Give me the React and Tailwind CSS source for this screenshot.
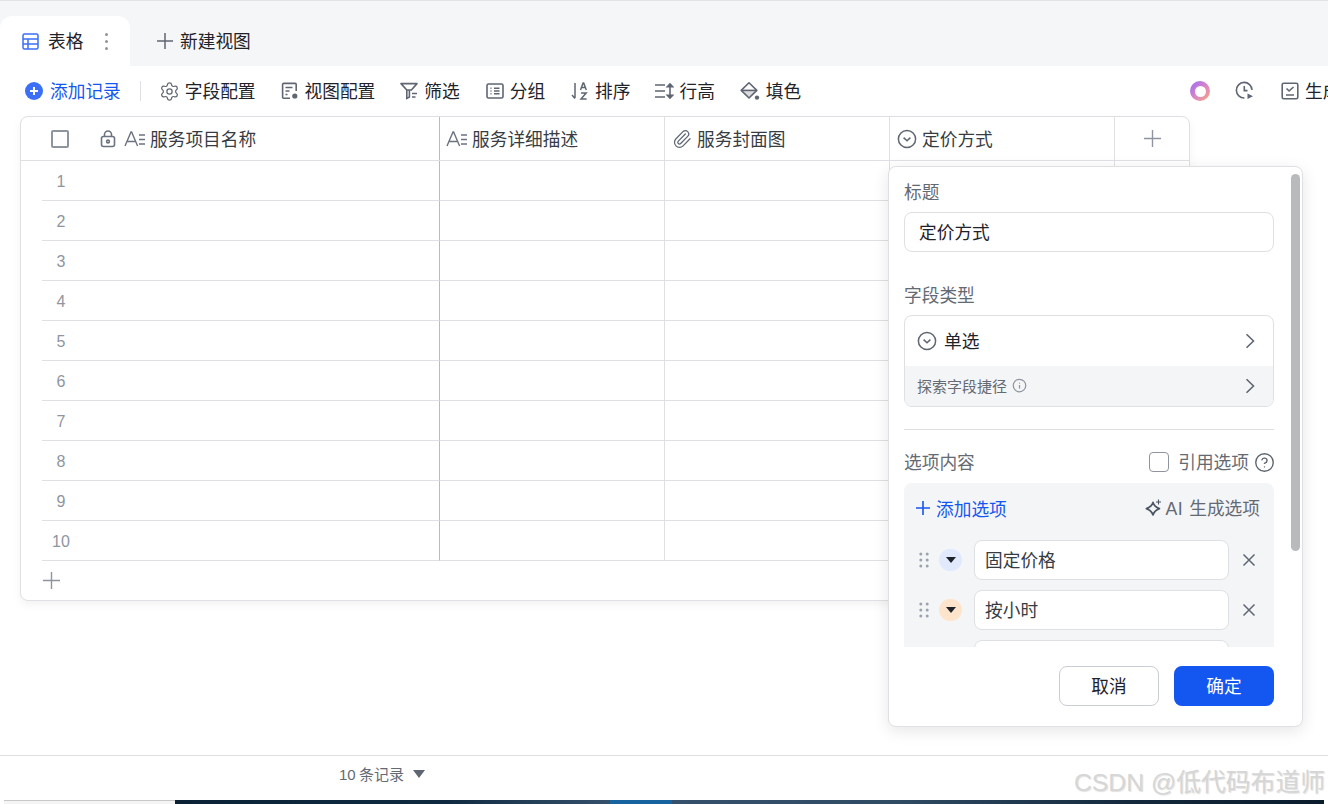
import React from "react";
import { Settings, Paperclip, Info, CircleHelp } from "lucide-react";

const FONT = "font-['Noto_Sans_CJK_SC','Liberation_Sans',sans-serif]";
const LATIN = "font-['Liberation_Sans','Noto_Sans_CJK_SC',sans-serif]";

function Cross({ size, color = "#8f959e", width = 1.4 }) {
  return (
    <svg width={size} height={size} viewBox={`0 0 ${size} ${size}`} fill="none" stroke={color} strokeWidth={width}>
      <path d={`M${size / 2} 0V${size}M0 ${size / 2}H${size}`} />
    </svg>
  );
}

function CloseIcon() {
  return (
    <svg width="14" height="14" viewBox="0 0 14 14" fill="none" stroke="#5f6672" strokeWidth="1.5">
      <path d="m1.5 1.5 11 11M12.5 1.5l-11 11" />
    </svg>
  );
}

function Chevron() {
  return (
    <svg width="10" height="16" viewBox="0 0 10 16" fill="none" stroke="#5f6672" strokeWidth="1.6">
      <path d="m1.5 1.2 7 6.8-7 6.8" />
    </svg>
  );
}

function TextIcon() {
  return (
    <svg width="22" height="20" viewBox="0 0 22 20" fill="none" stroke="#6b7280" strokeWidth="1.4">
      <path d="M1 17 7 3h.6l6 14M3.2 12.5h8.6" />
      <path d="M15 6h6M15 10.5h6M15 15h6" />
    </svg>
  );
}

function LockIcon() {
  return (
    <svg width="16" height="18" viewBox="0 0 16 18" fill="none" stroke="#6b7280" strokeWidth="1.6">
      <rect x="1.5" y="6.5" width="13" height="10" rx="2" />
      <path d="M4.5 6.5V4.5a3.5 3.5 0 0 1 7 0v2" />
      <circle cx="8" cy="11.5" r="1.4" />
    </svg>
  );
}

function SelectIcon() {
  return (
    <svg width="20" height="20" viewBox="0 0 20 20" fill="none" stroke="#5f6672" strokeWidth="1.5">
      <circle cx="10" cy="10" r="8.6" />
      <path d="m6.6 8.6 3.4 3.2 3.4-3.2" />
    </svg>
  );
}

function ViewConfigIcon() {
  return (
    <svg width="18" height="18" viewBox="0 0 18 18" fill="none" stroke="#5f6672" strokeWidth="1.6">
      <path d="M9 16.2H2.6a1 1 0 0 1-1-1V2.4a1 1 0 0 1 1-1h11.6a1 1 0 0 1 1 1V9" />
      <path d="M4.5 5.5h7M4.5 9h4M4.5 12.5h2" />
      <circle cx="13.8" cy="14" r="2.6" fill="#5f6672" stroke="none" />
    </svg>
  );
}

function FilterIcon() {
  return (
    <svg width="18" height="18" viewBox="0 0 18 18" fill="none" stroke="#5f6672" strokeWidth="1.6">
      <path d="M1 1.6h16l-5.6 6.4H6.8Z" strokeLinejoin="round" />
      <path d="M6.8 8v8.4l2.6-1.4V8" />
      <path d="M12 11.5h5M12 15h3.5" />
    </svg>
  );
}

function GroupIcon() {
  return (
    <svg width="18" height="18" viewBox="0 0 18 18" fill="none" stroke="#5f6672" strokeWidth="1.6">
      <rect x="1" y="2" width="16" height="14" rx="1.5" />
      <path d="M4.5 6.3h1M8 6.3h5.5M4.5 9h1M8 9h5.5M4.5 11.8h1M8 11.8h5.5" />
    </svg>
  );
}

function SortIcon() {
  return (
    <svg width="18" height="20" viewBox="0 0 18 20" fill="none" stroke="#5f6672" strokeWidth="1.5">
      <path d="M4 2v15M1 14l3 3.4" />
      <path d="m9.5 9 2.6-7h.6l2.6 7M10.5 6.5h3.8" />
      <path d="M10 12h5.2l-5.2 6h5.6" />
    </svg>
  );
}

function RowHeightIcon() {
  return (
    <svg width="20" height="18" viewBox="0 0 20 18" fill="none" stroke="#5f6672" strokeWidth="1.6">
      <path d="M1 3h10M1 9h10M1 15h10" />
      <path d="M16 2v14" />
      <path d="M13.5 4.6 16 2l2.5 2.6ZM13.5 13.4 16 16l2.5-2.6Z" fill="#5f6672" />
    </svg>
  );
}

function FillIcon() {
  return (
    <svg width="20" height="20" viewBox="0 0 20 20" fill="none" stroke="#5f6672" strokeWidth="1.6">
      <path d="M1.5 9.5h15L9 16.8Z" fill="#d9dbdf" stroke="none" />
      <path d="M9 1.8 1.2 9.4 9 17l7.8-7.6Z" strokeLinejoin="round" />
      <path d="M1.5 9.4h15" />
      <circle cx="17" cy="16.6" r="2.2" fill="#5f6672" stroke="none" />
    </svg>
  );
}

function HistoryIcon() {
  return (
    <svg width="20" height="20" viewBox="0 0 20 20" fill="none" stroke="#5f6672" strokeWidth="1.6">
      <path d="M17 9a7.8 7.8 0 1 0-7.6 8" />
      <path d="M9.3 5v4.6h3.2" />
      <path d="m12.5 12.5 5.5 2.8-5.5 2.8Z" fill="#5f6672" stroke="none" />
    </svg>
  );
}

function FormIcon() {
  return (
    <svg width="18" height="18" viewBox="0 0 18 18" fill="none" stroke="#5f6672" strokeWidth="1.6">
      <rect x="1.2" y="1.2" width="15.6" height="15.6" rx="1.5" />
      <path d="m5.5 6.5 2.6 2.5 4.4-4M5 13h8" />
    </svg>
  );
}

function SparkIcon() {
  return (
    <svg width="18" height="18" viewBox="0 0 18 18" fill="none" stroke="#4b5563" strokeWidth="1.7">
      <path d="M8 3.4C9 6.6 10.4 8 14.4 9.6 10.4 11 9 12.6 8 16 7 12.6 5.6 11 1.4 9.6 5.6 8 7 6.6 8 3.4Z" strokeLinejoin="round" />
      <path d="M13.5 0.5v5M11 3h5" strokeWidth="1.1" />
    </svg>
  );
}

function Handle() {
  return (
    <svg width="10" height="16" viewBox="0 0 10 16" fill="#9ca3af">
      <circle cx="1.8" cy="2" r="1.5" /><circle cx="8.2" cy="2" r="1.5" />
      <circle cx="1.8" cy="8" r="1.5" /><circle cx="8.2" cy="8" r="1.5" />
      <circle cx="1.8" cy="14" r="1.5" /><circle cx="8.2" cy="14" r="1.5" />
    </svg>
  );
}

function ToolItem({ icon, label, className }) {
  return (
    <div className={`flex items-center text-[#1f2329] ${className}`}>
      {icon}
      <span>{label}</span>
    </div>
  );
}

function OptionRow({ label, dotClass }) {
  return (
    <div className="flex items-center h-10">
      <div className="ml-[15px] w-[10px] flex"><Handle /></div>
      <div className={`ml-[10px] w-[23px] h-[22px] rounded-full flex items-center justify-center ${dotClass}`}>
        <div className="w-0 h-0 border-x-[5px] border-x-transparent border-t-[6px] border-t-[#1f2329]" />
      </div>
      <div className="ml-3 w-[255px] h-10 bg-white border border-[#dee0e3] rounded-lg flex items-center px-[10px] text-[#373c43]">
        {label}
      </div>
      <div className="ml-[13px] flex"><CloseIcon /></div>
    </div>
  );
}

function FieldPopup() {
  return (
    <div className="absolute left-[888px] top-[166px] w-[415px] h-[561px] bg-white border border-[#dee0e3] rounded-lg shadow-[0_4px_16px_rgba(0,0,0,0.1)] flex flex-col z-10">
      <div className="absolute right-[2px] top-[7px] w-[9px] h-[377px] bg-[#b9babc] rounded-full" />
      <div className="h-[480px] shrink-0 overflow-hidden pl-[15px] w-[385px]">
        <div className="mt-[12px] h-[26px] flex items-center text-[#646a73]">标题</div>
        <div className="mt-[7px] h-10 border border-[#dee0e3] rounded-lg flex items-center px-[14px] text-[#1f2329]">定价方式</div>
        <div className="mt-[30px] h-[26px] flex items-center text-[#646a73]">字段类型</div>
        <div className="mt-[7px] h-[92px] border border-[#dee0e3] rounded-lg overflow-hidden">
          <div className="h-[50px] flex items-center justify-between pl-3 pr-[18px] text-[#1f2329]">
            <div className="flex items-center gap-[7px]"><SelectIcon /><span>单选</span></div>
            <Chevron />
          </div>
          <div className="h-10 pb-[1px] bg-[#f4f5f7] flex items-center justify-between pl-3 pr-[18px] text-[#646a73] text-[15px]">
            <div className="flex items-center gap-[5px]"><span>探索字段捷径</span><Info size={15} className="text-[#8f959e]" /></div>
            <Chevron />
          </div>
        </div>
        <div className="mt-[22px] border-t border-[#dee0e3]" />
        <div className="mt-[19px] h-[26px] flex items-center justify-between text-[#646a73]">
          <span>选项内容</span>
          <div className="flex items-center">
            <div className="w-5 h-5 border border-[#8f959e] rounded-[4px] mr-[9px]" />
            <span>引用选项</span>
            <CircleHelp size={21} strokeWidth={1.6} className="ml-[5px] -mr-[1px] text-[#5f6672]" />
          </div>
        </div>
        <div className="mt-[8px] h-[300px] bg-[#f4f5f7] rounded-t-lg">
          <div className="h-[51px] flex items-center justify-between pl-[12px] pr-[14px]">
            <div className="flex items-center gap-[6px] text-[#1456f0]">
              <Cross size={14} color="#1456f0" width={1.6} /><span>添加选项</span>
            </div>
            <div className="flex items-center gap-[3px] text-[#646a73]">
              <SparkIcon />
              <span><span className={`${LATIN} font-medium mr-[2px] tracking-[0.5px]`}>AI</span> 生成选项</span>
            </div>
          </div>
          <div className="mt-[6px] flex flex-col gap-[10px]">
            <OptionRow label="固定价格" dotClass="bg-[#e1e9ff]" />
            <OptionRow label="按小时" dotClass="bg-[#ffe4cc]" />
            <OptionRow label="" dotClass="bg-[#f4f5f7]" />
          </div>
        </div>
      </div>
      <div className="flex justify-end gap-[15px] pt-[19px] pr-[28px]">
        <div className="w-[100px] h-10 pb-[1px] border border-[#c9cdd4] rounded-lg flex items-center justify-center text-[#1f2329]">取消</div>
        <div className="w-[100px] h-10 pb-[1px] bg-[#1456f0] rounded-lg flex items-center justify-center text-white">确定</div>
      </div>
    </div>
  );
}

function HeaderCell({ icon, label, className }) {
  return (
    <div className={`flex items-center text-[#373c43] ${className}`}>
      {icon}
      <span>{label}</span>
    </div>
  );
}

export default function App() {
  const rows = [1, 2, 3, 4, 5, 6, 7, 8, 9, 10];

  return (
    <div className={`relative w-[1328px] h-[804px] overflow-hidden bg-white flex flex-col text-[17.7px] leading-none ${FONT}`}>
      {/* tabs */}
      <div className="h-[66px] shrink-0 bg-[#f5f6f8] border-t border-[#e2e3e5] flex items-end">
        <div className="w-[130px] h-[50px] bg-white rounded-t-xl flex items-center pl-[22px] text-[#1f2329]">
          <svg width="17" height="17" viewBox="0 0 17 17" fill="none" stroke="#3b6ff5" strokeWidth="1.5">
            <rect x="1" y="1" width="15" height="15" rx="1.5" />
            <path d="M1 6h15M1 11h15M6 6v10" />
          </svg>
          <span className="ml-[9px]">表格</span>
          <div className="ml-[22px] flex flex-col gap-[4px]">
            <div className="w-[3px] h-[3px] rounded-full bg-[#8f959e]" />
            <div className="w-[3px] h-[3px] rounded-full bg-[#8f959e]" />
            <div className="w-[3px] h-[3px] rounded-full bg-[#8f959e]" />
          </div>
        </div>
        <div className="h-[50px] flex items-center ml-[27px] text-[#1f2329]">
          <Cross size={16} color="#5f6672" width={1.5} />
          <span className="ml-[7px]">新建视图</span>
        </div>
      </div>

      {/* toolbar */}
      <div className="h-[50px] shrink-0 flex items-center pl-[25px] relative">
        <div className="flex items-center text-[#1456f0]">
          <div className="w-[18px] h-[18px] rounded-full bg-[#3b6ff5] flex items-center justify-center">
            <Cross size={8} color="#ffffff" width={2} />
          </div>
          <span className="ml-[7px]">添加记录</span>
        </div>
        <div className="ml-[19px] w-px h-[20px] bg-[#dee0e3]" />
        <ToolItem className="ml-[20px] gap-[6px]" icon={<Settings size={21} strokeWidth={1.4} className="text-[#5f6672] -mx-[1.5px]" />} label="字段配置" />
        <ToolItem className="ml-[25px] gap-[6px]" icon={<ViewConfigIcon />} label="视图配置" />
        <ToolItem className="ml-[25px] gap-[6px]" icon={<FilterIcon />} label="筛选" />
        <ToolItem className="ml-[26px] gap-[6px]" icon={<GroupIcon />} label="分组" />
        <ToolItem className="ml-[26px] gap-[6px]" icon={<SortIcon />} label="排序" />
        <ToolItem className="ml-[24px] gap-[5px]" icon={<RowHeightIcon />} label="行高" />
        <ToolItem className="ml-[25px] gap-[6px]" icon={<FillIcon />} label="填色" />
        <div className="ml-auto flex items-center">
          <div className="w-5 h-5 rounded-full bg-gradient-to-br from-[#9a66f5] via-[#d884c8] to-[#ffa36e] flex items-center justify-center">
            <div className="w-[11px] h-[11px] rounded-full bg-white" />
          </div>
          <div className="ml-[25px] flex"><HistoryIcon /></div>
          <div className="ml-[26px] flex"><FormIcon /></div>
          <span className="ml-[6px] w-[23px] overflow-hidden whitespace-nowrap text-[#1f2329]">生成表单</span>
        </div>
      </div>

      {/* grid */}
      <div className="flex-1 pl-[20px]">
        <div className="w-[1170px] h-[485px] border border-[#dee0e3] rounded-lg bg-white shadow-[0_4px_10px_rgba(0,0,0,0.05)] flex flex-col">
          <div className="h-[44px] shrink-0 flex border-b border-[#dee0e3]">
            <div className="w-[419px] flex items-center border-r border-[#b9bbbf]">
              <div className="ml-[30px] w-[18px] h-[18px] border-2 border-[#8f959e] rounded-[2px]" />
              <div className="ml-[31px] flex"><LockIcon /></div>
              <div className="ml-[8px] flex"><TextIcon /></div>
              <span className="ml-[4px] text-[#373c43]">服务项目名称</span>
            </div>
            <HeaderCell className="w-[225px] pl-[6px] gap-[4px] border-r border-[#dee0e3]" icon={<TextIcon />} label="服务详细描述" />
            <HeaderCell className="w-[225px] pl-[7px] gap-[5px] border-r border-[#dee0e3]" icon={<Paperclip size={20} strokeWidth={1.5} className="text-[#5f6672]" />} label="服务封面图" />
            <HeaderCell className="w-[225px] pl-[7px] gap-[5px] border-r border-[#dee0e3]" icon={<SelectIcon />} label="定价方式" />
            <div className="flex-1 flex items-center justify-center">
              <Cross size={17} />
            </div>
          </div>
          {rows.map((n) => (
            <div key={n} className="h-10 shrink-0 flex pl-[21px]">
              <div className={`w-[398px] pt-[3px] flex items-center border-b border-r border-b-[#dee0e3] border-r-[#b9bbbf] text-[#8f959e] text-[16px] ${LATIN}`}>
                <span className="w-[38px] text-center">{n}</span>
              </div>
              <div className="w-[225px] border-b border-r border-[#dee0e3]" />
              <div className="w-[225px] border-b border-r border-[#dee0e3]" />
              <div className="w-[225px] border-b border-r border-[#dee0e3]" />
              <div className="flex-1 border-b border-[#dee0e3]" />
            </div>
          ))}
          <div className="flex-1 flex items-center pl-[22px]">
            <Cross size={17} />
          </div>
        </div>
      </div>

      {/* footer */}
      <div className="h-[45px] shrink-0 border-t border-[#dee0e3] flex items-center pl-[339px] pb-[8px] text-[15px] text-[#646a73]">
        <span><span className={LATIN}>10</span> 条记录</span>
        <div className="ml-[9px] w-0 h-0 border-x-[6px] border-x-transparent border-t-[8px] border-t-[#5f6672]" />
      </div>
      <div className="h-[4px] shrink-0 flex">
        <div className="ml-[4px] w-[171px] border-t border-[#c8c8c8] bg-[#f4f4f4]" />
        <div className="w-[435px] bg-[linear-gradient(90deg,#0b2235_0%,#0f2a40_62%,#35506b_100%)]" />
        <div className="w-[62px] bg-[#17639f]" />
        <div className="w-[652px] bg-[linear-gradient(90deg,#35506b_0%,#2f4a63_35%,#14293c_70%,#0a1c2c_100%)]" />
        <div className="flex-1 bg-white" />
      </div>

      <FieldPopup />

      <div className={`absolute right-[3px] top-[771px] text-[24.8px] text-[#d6d6d6] whitespace-nowrap z-20 [text-shadow:1px_1px_1px_rgba(0,0,0,0.12)] ${LATIN}`}>
        CSDN @低代码布道师
      </div>
    </div>
  );
}
